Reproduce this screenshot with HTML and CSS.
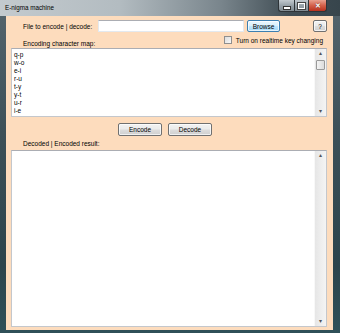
FILE: index.html
```html
<!doctype html>
<html>
	<head>
		<meta charset="UTF-8">
		<link rel="stylesheet" href="styles.css">
	</head>
	<body>
		<div class="window">
			<!-- Title bar -->
			<div class="titlebar">
				<span class="title">E-nigma machine</span>
				<div class="caption">
					<span class="cap min"><i></i></span>
					<span class="cap max"><i></i></span>
					<span class="cap close">&#x2715;</span>
				</div>
			</div>

			<!-- Client area -->
			<div class="client">
				<div class="row file">
					<span class="label">File to encode | decode:</span>
					<span class="textbox"></span>
					<span class="button browse">Browse</span>
					<span class="button help">?</span>
				</div>
				<div class="row options">
					<span class="label">Encoding character map:</span>
					<label class="check"><span class="box"></span>Turn on realtime key changing</label>
				</div>
				<div class="list map">
					<div class="lines">
						<div>q-p</div>
						<div>w-o</div>
						<div>e-i</div>
						<div>r-u</div>
						<div>t-y</div>
						<div>y-t</div>
						<div>u-r</div>
						<div>i-e</div>
					</div>
					<div class="vscroll">
						<span class="arrow">&#9652;</span>
						<span class="thumb"></span>
						<span class="arrow down">&#9662;</span>
					</div>
				</div>
				<div class="row actions">
					<span class="button">Encode</span>
					<span class="button">Decode</span>
				</div>
				<div class="row result">
					<span class="label">Decoded | Encoded result:</span>
				</div>
				<div class="list output">
					<div class="lines"></div>
					<div class="vscroll">
						<span class="arrow">&#9652;</span>
						<span class="arrow down">&#9662;</span>
					</div>
				</div>
			</div>
		</div>
	</body>
</html>
```

FILE: styles.css
```css
html, body {
	margin: 0;
	padding: 0;
}
body {
	width: 340px;
	height: 333px;
	overflow: hidden;
	font-family: "Liberation Sans", Arial, sans-serif;
	font-size: 6.5px;
	color: #000;
}
div.window {
	width: 340px;
	height: 333px;
	box-sizing: border-box;
	display: flex;
	flex-direction: column;
	background: linear-gradient(to bottom, #55656d 0%, #3c5058 40%, #2c444c 80%, #2f5058 100%);
}
div.titlebar {
	height: 16px;
	display: flex;
	align-items: flex-start;
	background: linear-gradient(to right, #c3cace 0%, #b3bcc1 35%, #79858c 65%, #414e55 85%, #37454c 100%);
}
span.title {
	padding-left: 5px;
	padding-top: 4px;
	font-size: 6.3px;
}
div.caption {
	margin-left: auto;
	margin-right: 13px;
	display: flex;
	height: 12px;
}
span.cap {
	display: flex;
	align-items: center;
	justify-content: center;
	box-sizing: border-box;
	height: 12px;
	border: 1px solid #2e3438;
	border-top: none;
	background: linear-gradient(to bottom, #c2c9ce 0%, #98a2a9 50%, #7f8a91 100%);
}
span.min {
	width: 16px;
	border-radius: 0 0 0 3px;
	border-right: none;
}
span.min i {
	width: 6px;
	height: 2px;
	margin-top: 4px;
	background: #fff;
	border: 1px solid #333;
}
span.max {
	width: 14px;
	border-right: none;
}
span.max i {
	width: 5px;
	height: 4px;
	border: 1px solid #fff;
	outline: 1px solid #444;
}
span.close {
	width: 19px;
	border-radius: 0 0 3px 0;
	color: #fff;
	font-size: 7px;
	font-weight: bold;
	text-shadow: 0 0 1px #400;
	background: linear-gradient(to bottom, #e8a08e 0%, #d3604a 50%, #b8301c 100%);
}
div.client {
	flex: 1;
	margin: 0 7px 3px 6px;
	padding: 4px 6px 3px 5px;
	display: flex;
	flex-direction: column;
	background-color: #fddcbd;
}
div.row {
	display: flex;
}
div.file {
	height: 12px;
	align-items: center;
}
div.file span.label {
	width: 75px;
	padding-left: 12px;
}
span.textbox {
	width: 146px;
	height: 12px;
	box-sizing: border-box;
	background: #fff;
	border: 1px solid #e3e9ef;
	border-top-color: #abadb3;
}
span.button {
	display: flex;
	align-items: center;
	justify-content: center;
	box-sizing: border-box;
	height: 12px;
	border: 1px solid #707070;
	border-radius: 2px;
	background: linear-gradient(to bottom, #f2f2f2 0%, #ebebeb 48%, #dddddd 52%, #cfcfcf 100%);
	box-shadow: inset 0 0 0 1px rgba(255, 255, 255, 0.7);
}
span.browse {
	width: 33px;
	margin-left: 3px;
	border-color: #3c7fb1;
	background: linear-gradient(to bottom, #eaf6fd 0%, #d9f0fc 48%, #bee6fd 52%, #a7d9f5 100%);
}
span.help {
	width: 14px;
	margin-left: auto;
}
div.options {
	height: 16px;
	justify-content: space-between;
}
div.options span.label {
	align-self: flex-end;
	padding-left: 12px;
	padding-bottom: 1px;
}
label.check {
	display: flex;
	align-items: center;
	height: 8px;
	margin-top: 4px;
	margin-right: 4px;
}
span.box {
	width: 8px;
	height: 8px;
	box-sizing: border-box;
	margin-right: 4px;
	border: 1px solid #8f8f8f;
	background: linear-gradient(to bottom right, #dcdcdc, #f8f8f8);
}
div.list {
	display: flex;
	box-sizing: border-box;
	background: #fff;
	border: 1px solid #c4c7cc;
	border-top-color: #abadb3;
}
div.map {
	height: 69px;
}
div.output {
	flex: 1;
}
div.lines {
	flex: 1;
	padding: 2px 0 0 2px;
	line-height: 8px;
	color: #000;
}
div.vscroll {
	width: 11px;
	display: flex;
	flex-direction: column;
	align-items: center;
	background: linear-gradient(to right, #e6e6e6, #f4f4f4);
	border-left: 1px solid #f8f8f8;
}
span.arrow {
	height: 9px;
	line-height: 9px;
	font-size: 6px;
	color: #555;
}
span.arrow.down {
	margin-top: auto;
}
span.thumb {
	width: 9px;
	height: 10px;
	margin-top: 2px;
	box-sizing: border-box;
	border: 1px solid #9a9a9a;
	border-radius: 1px;
	background: linear-gradient(to right, #f4f4f4, #dcdcdc);
}
div.actions {
	height: 13px;
	margin-top: 6px;
	padding-left: 107px;
	gap: 6px;
}
div.actions span.button {
	width: 44px;
	height: 13px;
}
div.result {
	height: 14px;
	align-items: center;
}
div.result span.label {
	padding-left: 12px;
}
```
